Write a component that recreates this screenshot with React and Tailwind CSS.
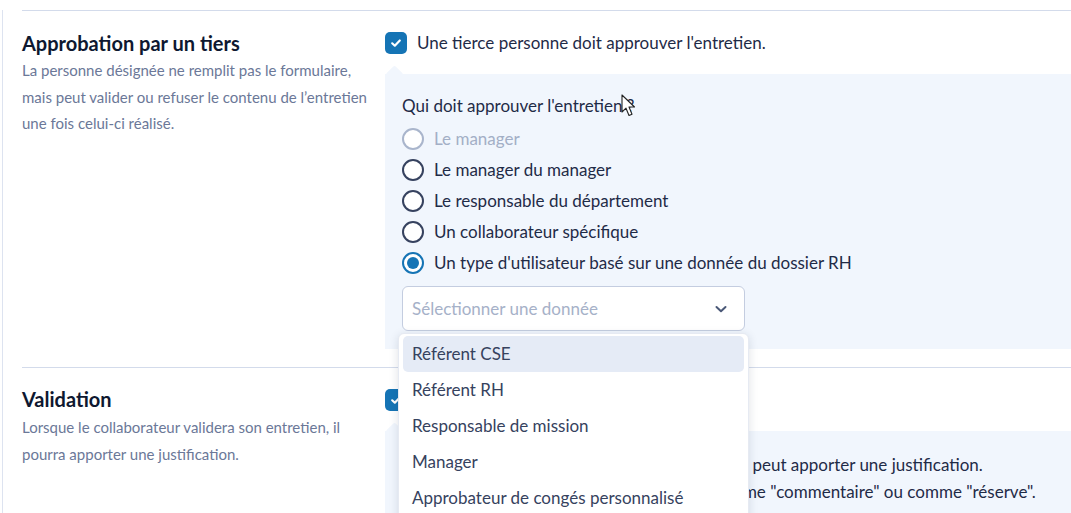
import React from "react";

const font = { fontFamily: "Lato, 'Noto Sans', sans-serif" };

function Checkbox() {
  return (
    <span className="flex h-[22px] w-[22px] shrink-0 items-center justify-center rounded-[5px] bg-[#1574b5]">
      <svg width="12" height="12" viewBox="0 0 12 12" fill="none">
        <path d="M2.2 6.3 4.8 8.7 9.8 3.5" stroke="white" strokeWidth="2.2" strokeLinecap="round" strokeLinejoin="round" />
      </svg>
    </span>
  );
}

function Radio({ state }) {
  if (state === "checked") {
    return (
      <span className="flex h-[22px] w-[22px] shrink-0 items-center justify-center rounded-full border-2 border-[#1574b5] bg-white">
        <span className="h-[12px] w-[12px] rounded-full bg-[#1574b5]" />
      </span>
    );
  }
  if (state === "disabled") {
    return <span className="h-[22px] w-[22px] shrink-0 rounded-full border-2 border-[#a9b5cc] bg-white" />;
  }
  return <span className="h-[22px] w-[22px] shrink-0 rounded-full border-2 border-[#36425f] bg-white" />;
}

function Notch() {
  return <span className="absolute left-[3px] top-[-6px] h-[13px] w-[13px] rotate-45 rounded-[2px] bg-[#f1f6fd]" />;
}

const options = [
  { label: "Le manager", state: "disabled" },
  { label: "Le manager du manager", state: "" },
  { label: "Le responsable du département", state: "" },
  { label: "Un collaborateur spécifique", state: "" },
  { label: "Un type d'utilisateur basé sur une donnée du dossier RH", state: "checked" },
];

const menu = [
  "Référent CSE",
  "Référent RH",
  "Responsable de mission",
  "Manager",
  "Approbateur de congés personnalisé",
  "Responsable hiérarchique",
];

export default function App() {
  return (
    <div className="relative h-[513px] w-full overflow-hidden bg-white" style={font}>
      <div className="ml-[2px] h-full border-l border-[#dde3f0] pl-[19px]">
        {/* Section 1 */}
        <div className="mt-[10px] flex border-t border-[#d3dbeb]">
          <div className="w-[363px] shrink-0 pt-[19px]">
            <h2 className="text-[20px] font-bold leading-[26px] text-[#0e1830]">Approbation par un tiers</h2>
            <p className="mt-[1px] w-[350px] text-[15px] leading-[26.5px] text-[#6b7898]">
              La personne désignée ne remplit pas le formulaire, mais peut valider ou refuser le contenu de l’entretien une fois celui-ci réalisé.
            </p>
          </div>
          <div className="flex-1 pt-[21px]">
            <div className="flex items-center gap-[10px]">
              <Checkbox />
              <span className="text-[17px] leading-[22px] text-[#1f2b47]">Une tierce personne doit approuver l'entretien.</span>
            </div>
            <div className="relative mt-[20px] bg-[#f1f6fd] px-[17px] pb-[18px] pt-[20px]">
              <Notch />
              <p className="relative mb-[5px] text-[17px] leading-[24px] text-[#1f2b47]">Qui doit approuver l'entretien ?</p>
              {options.map((o) => (
                <div key={o.label} className="flex h-[31px] items-center gap-[10px]">
                  <Radio state={o.state} />
                  <span className={"text-[17px] " + (o.state === "disabled" ? "text-[#a3afc6]" : "text-[#1f2b47]")}>{o.label}</span>
                </div>
              ))}
              <div className="relative mt-[8px] w-[343px]">
                <div className="flex h-[45px] items-center justify-between rounded-[6px] border border-[#c4cde0] bg-white pl-[9px] pr-[16px]">
                  <span className="text-[17px] text-[#a6b1c8]">Sélectionner une donnée</span>
                  <svg width="14" height="14" viewBox="0 0 14 14" fill="none">
                    <path d="M2.5 5 7 9.2 11.5 5" stroke="#4a5877" strokeWidth="2" strokeLinecap="round" strokeLinejoin="round" />
                  </svg>
                </div>
                <div className="absolute left-[-4px] top-[47px] z-20 w-[351px] rounded-[6px] border border-[#e6eaf2] bg-white pt-[2px] shadow-[0_2px_10px_rgba(30,40,70,0.14)]">
                  {menu.map((m, i) => (
                    <div
                      key={m}
                      className={
                        "mx-[4px] flex h-[36px] items-center rounded-[5px] px-[9px] text-[17px] text-[#36425e] " +
                        (i === 0 ? "bg-[#e5ebf6]" : "")
                      }
                    >
                      {m}
                    </div>
                  ))}
                </div>
              </div>
            </div>
          </div>
        </div>

        {/* Section 2 */}
        <div className="mt-[18px] flex border-t border-[#d3dbeb]">
          <div className="w-[363px] shrink-0 pt-[18px]">
            <h2 className="text-[20px] font-bold leading-[26px] text-[#0e1830]">Validation</h2>
            <p className="mt-[2px] w-[350px] text-[15px] leading-[26.5px] text-[#6b7898]">
              Lorsque le collaborateur validera son entretien, il pourra apporter une justification.
            </p>
          </div>
          <div className="flex-1 pt-[21px]">
            <div className="flex items-center gap-[10px]">
              <Checkbox />
              <span className="text-[17px] leading-[22px] text-[#1f2b47]">Activer la justification.</span>
            </div>
            <div className="relative mt-[20px] bg-[#f1f6fd] px-[17px] pb-[18px] pt-[20px]">
              <Notch />
              <p className="relative whitespace-nowrap text-[17px] leading-[27px] text-[#1f2b47]">
                Lorsque le collaborateur valide son entretien, il peut apporter une justification.
              </p>
              <p className="whitespace-nowrap text-[17px] leading-[27px] text-[#1f2b47]">
                Une justification pourra être affichée soit comme "commentaire" ou comme "réserve".
              </p>
            </div>
          </div>
        </div>
      </div>

      {/* mouse cursor */}
      <svg className="pointer-events-none absolute left-[621px] top-[94px] z-30" width="16" height="24" viewBox="0 0 16 24">
        <path d="M1 1 L1 18 L5 14.2 L8 21.5 L11 20.2 L8 13 L13.5 13 Z" fill="white" stroke="#222" strokeWidth="1.1" strokeLinejoin="round" />
      </svg>
    </div>
  );
}
